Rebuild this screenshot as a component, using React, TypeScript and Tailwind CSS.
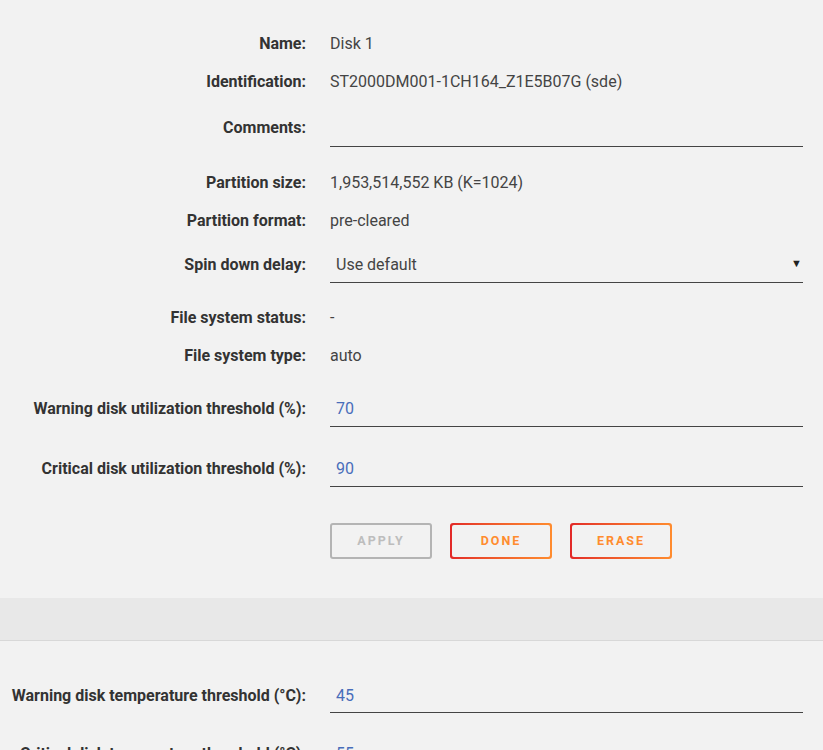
import React from "react";

const font = { fontFamily: "Roboto, 'Liberation Sans', sans-serif" };

function Label({ children }: { children: React.ReactNode }) {
  return (
    <div className="w-[306px] shrink-0 text-right text-[16px] font-bold text-[#333]">
      {children}
    </div>
  );
}

function TextRow({ label, value, h = "h-[38px]" }: { label: string; value: string; h?: string }) {
  return (
    <div className={`flex items-center ${h}`}>
      <Label>{label}</Label>
      <div className="ml-[24px] text-[16px] text-[#444]">{value}</div>
    </div>
  );
}

function GradButton({ children }: { children: React.ReactNode }) {
  return (
    <div className="w-[102px] h-[36px] rounded-[3px] p-[2px] bg-gradient-to-r from-[#e22828] to-[#ff8c2f]">
      <div className="w-full h-full rounded-[2px] bg-[#f2f2f2] flex items-center justify-center text-[12.5px] font-bold tracking-[2px] text-[#ff8c2f]">
        {children}
      </div>
    </div>
  );
}

export default function App() {
  return (
    <div className="w-[823px] h-[750px] overflow-hidden bg-[#f2f2f2]" style={font}>
      <div className="pt-[25px]">
        <TextRow label="Name:" value="Disk 1" />
        <TextRow label="Identification:" value="ST2000DM001-1CH164_Z1E5B07G (sde)" />
        <div className="flex items-start h-[63px]">
          <div className="mt-[8px] h-[38px] flex items-center">
            <Label>Comments:</Label>
          </div>
          <div className="ml-[24px] mt-[8px] h-[38px] w-[473px] border-b border-[#444]"></div>
        </div>
        <TextRow label="Partition size:" value="1,953,514,552 KB (K=1024)" />
        <TextRow label="Partition format:" value="pre-cleared" />
        <div className="flex items-start h-[59px]">
          <div className="mt-[7px] h-[36px] flex items-center">
            <Label>Spin down delay:</Label>
          </div>
          <div className="ml-[24px] mt-[7px] h-[36px] w-[473px] border-b border-[#444] flex items-center justify-between pl-[6px] pr-[1px]">
            <span className="text-[16px] text-[#444]">Use default</span>
            <span className="text-[11px] text-[#222]">▼</span>
          </div>
        </div>
        <TextRow label="File system status:" value="-" />
        <TextRow label="File system type:" value="auto" />
        <div className="flex items-start h-[60px]">
          <div className="mt-[16px] h-[36px] flex items-center">
            <Label>Warning disk utilization threshold (%):</Label>
          </div>
          <div className="ml-[24px] mt-[16px] h-[36px] w-[473px] border-b border-[#444] flex items-center pl-[6px]">
            <span className="text-[16px] text-[#486dba]">70</span>
          </div>
        </div>
        <div className="flex items-start h-[60px]">
          <div className="mt-[16px] h-[36px] flex items-center">
            <Label>Critical disk utilization threshold (%):</Label>
          </div>
          <div className="ml-[24px] mt-[16px] h-[36px] w-[473px] border-b border-[#444] flex items-center pl-[6px]">
            <span className="text-[16px] text-[#486dba]">90</span>
          </div>
        </div>
        <div className="flex h-[103px] pt-[28px] pl-[330px] gap-[18px]">
          <div className="w-[102px] h-[36px] rounded-[3px] border-2 border-[#b4b4b4] flex items-center justify-center text-[12.5px] font-bold tracking-[2px] text-[#bdbdbd]">
            APPLY
          </div>
          <GradButton>DONE</GradButton>
          <GradButton>ERASE</GradButton>
        </div>
        <div className="h-[43px] bg-[#e8e8e8] border-b border-[#d8d8d8]"></div>
        <div className="flex items-start h-[73px]">
          <div className="mt-[36px] h-[36px] flex items-center pt-[2px]">
            <Label>Warning disk temperature threshold (°C):</Label>
          </div>
          <div className="ml-[24px] mt-[36px] h-[36px] w-[473px] border-b border-[#444] flex items-center pl-[6px] pt-[2px]">
            <span className="text-[16px] text-[#486dba]">45</span>
          </div>
        </div>
        <div className="flex items-start h-[60px]">
          <div className="mt-[22px] h-[36px] flex items-center">
            <Label>Critical disk temperature threshold (°C):</Label>
          </div>
          <div className="ml-[24px] mt-[22px] h-[36px] w-[473px] border-b border-[#444] flex items-center pl-[6px]">
            <span className="text-[16px] text-[#486dba]">55</span>
          </div>
        </div>
      </div>
    </div>
  );
}
